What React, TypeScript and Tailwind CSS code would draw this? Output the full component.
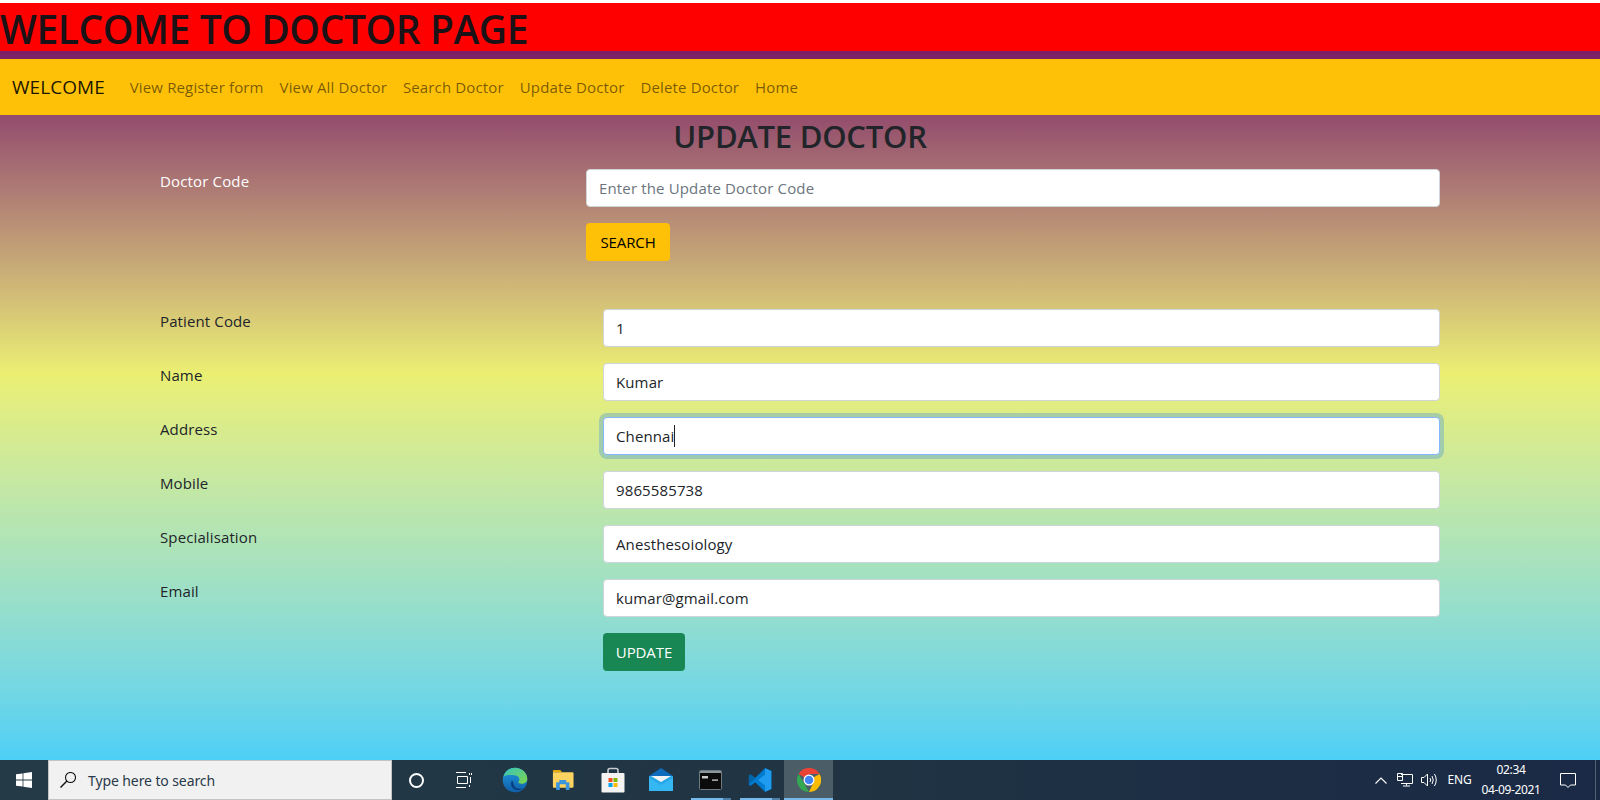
import React from "react";

const F = "font-['Open_Sans',sans-serif]";

function Row({ label, value, focused }: { label: string; value: string; focused?: boolean }) {
  return (
    <div className="flex h-[38px] mb-4 text-[15px] leading-6 text-[#212529] tracking-[0.12px]">
      <label className="w-[443px]">{label}</label>
      <div
        className={
          "flex-1 flex items-center rounded-[4px] bg-white px-3 h-[38px] border " +
          (focused
            ? "border-[#86b7fe] shadow-[0_0_0_4px_rgba(13,110,253,0.25)]"
            : "border-[#ced4da]")
        }
      >
        <span>{value}</span>
        {focused && <span className="w-px h-[22px] bg-[#212529]" />}
      </div>
    </div>
  );
}

function Cell({ children, className = "" }: { children: React.ReactNode; className?: string }) {
  return <div className={"h-10 flex items-center justify-center shrink-0 " + className}>{children}</div>;
}

function Underline({ w = 32, tail = 8 }: { w?: number; tail?: number }) {
  return (
    <div className="absolute bottom-0 left-0 right-0 flex h-[2px] justify-center gap-0">
      <div className="bg-[#76b9ed]" style={{ width: w }} />
      <div className="bg-[#4c80a8]" style={{ width: tail }} />
    </div>
  );
}

export default function App() {
  return (
    <div className={"h-[800px] w-[1600px] overflow-hidden flex flex-col bg-white pt-[3px] " + F}>
      <div className="flex-1 flex flex-col bg-gradient-to-b from-[#7a1b63] from-[6%] via-[#ebef72] via-[49%] to-[#4dcff6]">
        <h1 className="h-[48px] bg-[#ff0000] text-[39px] leading-[52px] font-semibold text-[#1a1216] tracking-[-0.43px] whitespace-nowrap">
          WELCOME TO DOCTOR PAGE
        </h1>
        <nav className="mt-2 h-14 bg-[#ffc107] flex items-center pl-3 text-[15px]">
          <a className="text-[19px] text-black/90 mr-[25px] tracking-[0.05px]">WELCOME</a>
          <div className="flex gap-4 text-black/55 tracking-[0.14px]">
            <a>View Register form</a>
            <a>View All Doctor</a>
            <a>Search Doctor</a>
            <a>Update Doctor</a>
            <a>Delete Doctor</a>
            <a>Home</a>
          </div>
        </nav>
        <h2 className="text-center text-[31px] leading-[38px] font-semibold text-[#212529] mt-[2px] tracking-[-0.25px]">UPDATE DOCTOR</h2>
        <div className="ml-[160px] w-[1280px] mt-[14px]">
          <div className="flex text-[15px] leading-6 tracking-[0.15px]">
            <label className="w-[426px] text-white">Doctor Code</label>
            <div className="flex-1">
              <div className="h-[38px] flex items-center rounded-[4px] bg-white border border-[#ced4da] px-3 text-[#6c757d]">
                Enter the Update Doctor Code
              </div>
              <button className="mt-4 h-[38px] w-[84px] rounded-[4px] bg-[#ffc107] text-black text-[15px] tracking-[-0.1px]">SEARCH</button>
            </div>
          </div>
          <div className="mt-12">
            <Row label="Patient Code" value="1" />
            <Row label="Name" value="Kumar" />
            <Row label="Address" value="Chennai" focused />
            <Row label="Mobile" value="9865585738" />
            <Row label="Specialisation" value="Anesthesoiology" />
            <Row label="Email" value="kumar@gmail.com" />
            <div className="pl-[443px]">
              <button className="h-[38px] w-[82px] rounded-[4px] bg-[#198754] text-white text-[15px] tracking-[-0.1px]">UPDATE</button>
            </div>
          </div>
        </div>
      </div>

      <div className="h-10 flex items-center bg-gradient-to-r from-[#243b47] via-[#203443] to-[#1a2945] text-white shrink-0">
        <Cell className="w-12">
          <svg width="16" height="16" viewBox="0 0 16 16" fill="#fff">
            <path d="M0 2.3 6.6 1.4V7.6H0ZM7.4 1.3 16 0V7.6H7.4ZM0 8.4H6.6V14.6L0 13.7ZM7.4 8.4H16V16L7.4 14.7Z" />
          </svg>
        </Cell>
        <div className="w-[344px] h-10 bg-[#f1f1f1] border border-[#c4c4c4] flex items-center shrink-0 text-[#2a3a4a] text-[14px]">
          <svg width="16" height="16" viewBox="0 0 16 16" fill="none" stroke="#111" strokeWidth="1.1" className="ml-[11px] mr-[12px]">
            <circle cx="10.5" cy="5.5" r="5" />
            <path d="M6.900 9.100.5 15.500" strokeWidth="1.400" />
          </svg>
          <span className="font-['Noto_Sans',sans-serif] tracking-[-0.1px]">Type here to search</span>
        </div>
        <Cell className="w-12">
          <div className="w-[15px] h-[15px] rounded-full border-2 border-white" />
        </Cell>
        <Cell className="w-12">
          <svg width="18" height="16" viewBox="0 0 18 16" fill="none" stroke="#fff" strokeWidth="1">
            <path d="M1 .5H11M1 15.5H11M2.500 4.500H12.500V11.500H2.500ZM14.500 1V3M16.500 1V3M15.500 5V11M14.500 13V15" />
          </svg>
        </Cell>
        <div className="w-[2px] shrink-0" />
        <Cell className="w-[49px]">
          <svg width="26" height="26" viewBox="0 0 26 26">
            <defs>
              <linearGradient id="e1" x1="0" y1="0" x2="1" y2="1">
                <stop offset="0" stopColor="#36c4c0" />
                <stop offset="1" stopColor="#7fd648" />
              </linearGradient>
              <linearGradient id="e2" x1="0" y1="0" x2="0" y2="1">
                <stop offset="0" stopColor="#1f9ae0" />
                <stop offset="1" stopColor="#0f5fa8" />
              </linearGradient>
            </defs>
            <circle cx="13" cy="13" r="12.300" fill="url(#e2)" />
            <path d="M1.500 10C3 3.500 8 .7 13 .7c6.800 0 12.300 5 12.300 11 0 3.200-2.600 5-5.600 5-2 0-3.400-.7-3.600-1.600 2.200-1.300 2-6.400-3.600-6.900C8 7.800 3.600 7.600 1.500 10Z" fill="url(#e1)" />
            <path d="M10 13.500c-2.600 3.500 0 9 5 9.600 2.500.3 5-.5 6.600-2-3 1-8.400 1-9.600-2.600-.6-1.800-.6-3.800-2-5Z" fill="#0b3f80" />
          </svg>
        </Cell>
        <Cell className="w-[49px]">
          <svg width="22" height="22" viewBox="0 0 24 24" className="-translate-x-[1px]">
            <path d="M1 2a1 1 0 0 1 1-1h7l2 2.500H1Z" fill="#e5a80c" />
            <path d="M1 3.500H22a1.500 1.500 0 0 1 1.500 1.500V19a1.500 1.500 0 0 1-1.500 1.500H2A1 1 0 0 1 1 19.500Z" fill="#fcd35f" />
            <path d="M4.500 14.500V23H8.500V16.500H15V23H19V14.500H15.500V12H8V14.500Z" fill="#3a96dd" />
          </svg>
        </Cell>
        <Cell className="w-[49px]">
          <svg width="24" height="26" viewBox="0 0 24 26">
            <path d="M7 7V3.500A2 2 0 0 1 9 1.500H15A2 2 0 0 1 17 3.500V7" fill="none" stroke="#c8ccce" strokeWidth="1.600" />
            <rect x="0.500" y="6" width="23" height="19.500" rx="1" fill="#f3f3f3" />
            <rect x="7.500" y="11" width="4" height="4" fill="#f25022" />
            <rect x="12.500" y="11" width="4" height="4" fill="#7fba00" />
            <rect x="7.500" y="16" width="4" height="4" fill="#00a4ef" />
            <rect x="12.500" y="16" width="4" height="4" fill="#ffb900" />
          </svg>
        </Cell>
        <Cell className="w-[49px]">
          <svg width="24" height="24" viewBox="0 0 24 24" className="-translate-x-[1px]">
            <path d="M0 8 12 0 24 8V12H0Z" fill="#0f6cbd" />
            <rect x="0" y="8" width="24" height="15" fill="#28a8ea" />
            <path d="M2 8H22L12 14Z" fill="#f4f4f4" />
            <path d="M0 23V10L12 17 24 10V23Z" fill="#35b8f1" />
          </svg>
        </Cell>
        <Cell className="w-[49px] relative">
          <svg width="23" height="20" viewBox="0 0 23 20">
            <rect x="0.500" y="0.500" width="22" height="19" rx="1" fill="#0c0c0c" stroke="#6f7b80" />
            <rect x="1" y="1" width="21" height="2" fill="#8c979c" />
            <rect x="3" y="6" width="6" height="2.500" fill="#c8c8c8" />
            <rect x="13" y="9.500" width="6" height="1.200" fill="#e0e0e0" />
          </svg>
          <Underline />
        </Cell>
        <Cell className="w-[49px] relative">
          <svg width="24" height="24" viewBox="0 0 100 100">
            <path d="M71 99 30 59 11 74 3 70V30L11 26 30 41 71 1 97 12V88Z" fill="#0065a9" />
            <path d="M71 1 97 12V88L71 99 30 59 11 74 3 70 71 1Z" fill="#007acc" />
            <path d="M71 1 97 12V88L71 99ZM71 27 42 50 71 73Z" fill="#1f9cf0" fillRule="evenodd" />
          </svg>
          <Underline />
        </Cell>
        <Cell className="w-[49px] relative bg-[#4b5d66]">
          <svg width="24" height="24" viewBox="0 0 48 48">
            <path d="M24 24 3.200 12A24 24 0 0 1 45 12H24Z" fill="#ea4335" />
            <path d="M24 24 45 12A24 24 0 0 1 24 48L35 24Z" fill="#fbbc05" />
            <path d="M24 48A24 24 0 0 1 3.200 12L14 30Z" fill="#34a853" />
            <circle cx="24" cy="24" r="11" fill="#fff" />
            <circle cx="24" cy="24" r="8.500" fill="#4285f4" />
          </svg>
          <div className="absolute bottom-0 left-0 right-0 h-[2px] bg-[#76b9ed]" />
        </Cell>

        <div className="flex-1" />

        <Cell className="w-6">
          <svg width="12" height="7" viewBox="0 0 12 7" fill="none" stroke="#fff" strokeWidth="1.100">
            <path d="M.5 6.500 6 1l5.500 5.500" />
          </svg>
        </Cell>
        <Cell className="w-6">
          <svg width="16" height="14" viewBox="0 0 16 14" fill="none" stroke="#fff" strokeWidth="1">
            <path d="M4 1.500H15.500V10.500H4M.5.500H5.500V7.500H.5ZM.5 3.500H5.500M9.500 10.500V12.500M6 13H13" />
          </svg>
        </Cell>
        <Cell className="w-6">
          <svg width="17" height="14" viewBox="0 0 17 14" fill="none" stroke="#fff" strokeWidth="1">
            <path d="M.5 4.500H3L6.500 1V13L3 9.500H.5ZM9 5Q10.500 7 9 9M11 3Q13.500 7 11 11M13.500 1Q17 7 13.500 13" />
          </svg>
        </Cell>
        <div className="w-[37px] text-center text-[12px] shrink-0 font-['Noto_Sans',sans-serif] tracking-[-0.2px]">ENG</div>
        <div className="w-[63px] pl-[3px] text-center text-[12px] leading-[20px] shrink-0 font-['Noto_Sans',sans-serif] tracking-[-0.35px]">
          <div>02:34</div>
          <div>04-09-2021</div>
        </div>
        <Cell className="w-[53px]">
          <svg width="16" height="15" viewBox="0 0 16 15" fill="none" stroke="#fff" strokeWidth="1">
            <path d="M.5.500H15.500V12H10.500L8 14.500 5.500 12H.5Z" />
          </svg>
        </Cell>
        <div className="w-[5px] h-10 border-l border-[#55626f] ml-[1px]" />
      </div>
    </div>
  );
}
